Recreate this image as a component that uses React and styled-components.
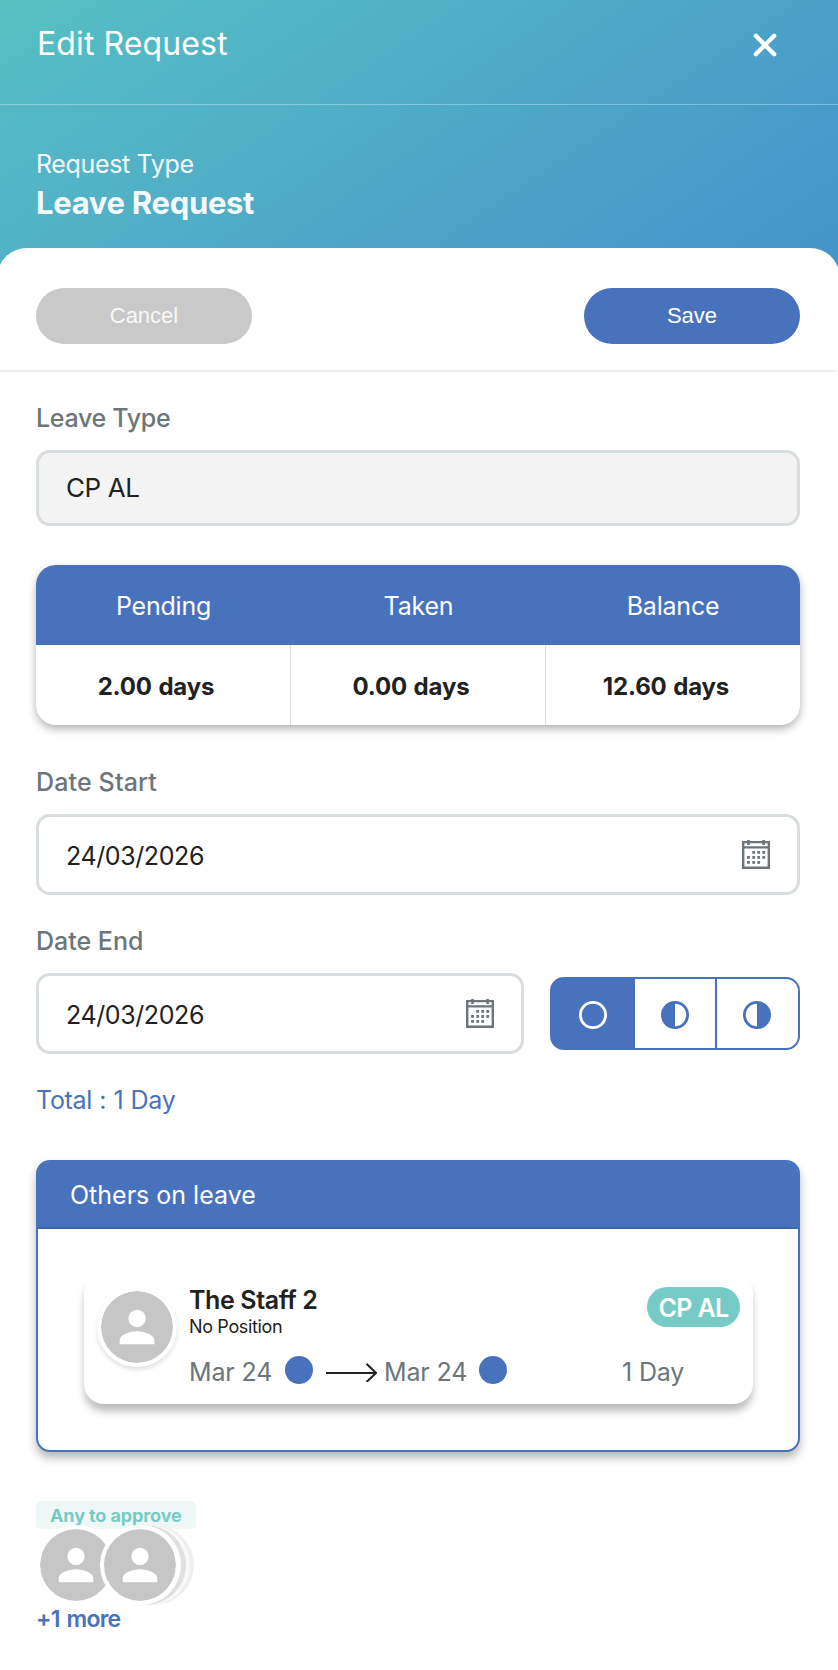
import React from 'react'
import styled, { createGlobalStyle } from 'styled-components'

const blue = '#4872bc'
const grey = '#6c757a'

const GlobalStyle = createGlobalStyle`
  * {
    box-sizing: border-box;
  }
  body {
    margin: 0;
    overflow-x: hidden;
    background: #fff;
    color: #212121;
    font-family: Inter, "Liberation Sans", sans-serif;
    font-size: 25px;
    line-height: 32px;
  }
  button {
    border: none;
    padding: 0;
    background: none;
    cursor: pointer;
  }
  svg {
    display: block;
    flex: none;
  }
`

const Header = styled.header`
  height: 282px;
  color: #fff;
  background: linear-gradient(146deg, #58c2c2 0%, #54bac5 12%, #50afc7 39%, #4a9fc8 71%, #4493c9 100%);
`

const TitleBar = styled.div`
  display: flex;
  justify-content: space-between;
  align-items: flex-start;
  height: 105px;
  padding: 23px 61px 0 37px;
  border-bottom: 1px solid rgba(255, 255, 255, 0.3);
`

const Title = styled.h1`
  margin: 0;
  font-size: 32px;
  font-weight: 400;
  line-height: 42px;
  letter-spacing: 0.1px;
`

const CloseButton = styled.button`
  margin-top: 10px;
`

const RequestType = styled.div`
  padding: 40px 36px 0;
  line-height: 38px;
  letter-spacing: -0.35px;
  color: #f5f9fc;
`

const RequestName = styled.div`
  font-size: 31px;
  font-weight: 700;
  line-height: 40px;
  letter-spacing: -0.3px;
`

// a little wider than the page, so its round corners run off both edges
const Sheet = styled.main`
  margin: -34px -2px 0 -3px;
  padding: 0 2px 0 3px;
  background: #fff;
  border-radius: 30px 30px 0 0;
`

const Actions = styled.div`
  display: flex;
  justify-content: space-between;
  margin-right: 2px;
  padding: 40px 36px 26px;
  border-bottom: 2px solid #f1f1f1;
`

const PillButton = styled.button`
  width: 216px;
  height: 56px;
  border-radius: 28px;
  font-family: "Liberation Sans", Arial, sans-serif;
  font-size: 22px;
  color: ${p => (p.$primary ? '#fff' : '#f8f8f8')};
  background: ${p => (p.$primary ? blue : '#c9c9c9')};
`

const Form = styled.div`
  padding: 30px 38px 0 36px;
`

const Label = styled.div`
  margin-bottom: 16px;
  font-weight: 500;
  color: ${grey};
  letter-spacing: ${p => p.$spacing || '0'};
`

const Field = styled.div`
  flex: 1;
  display: flex;
  align-items: center;
  justify-content: space-between;
  height: ${p => (p.$disabled ? '76px' : '81px')};
  padding: 0 27px;
  border: 3px solid #d8dddf;
  border-radius: 14px;
  background: ${p => (p.$disabled ? '#f4f4f4' : '#fff')};
  font-size: ${p => (p.$disabled ? '26px' : '25px')};
  letter-spacing: -0.4px;
`

const FieldValue = styled.span`
  padding-top: 2px;
`

const Balances = styled.div`
  display: grid;
  grid-template-columns: 255px 255px 254px;
  grid-auto-rows: 80px;
  margin: 39px 0 41px;
  border-radius: 20px;
  overflow: hidden;
  box-shadow: 0 4px 8px rgba(0, 0, 0, 0.3);
`

const HeadCell = styled.div`
  display: flex;
  align-items: center;
  justify-content: center;
  padding-top: 2px;
  color: #fff;
  background: ${blue};
  letter-spacing: -0.2px;
`

const Cell = styled.div`
  display: flex;
  align-items: center;
  justify-content: center;
  padding: 4px 14px 0 0;
  font-size: 24px;
  font-weight: 700;
  letter-spacing: -0.15px;
  word-spacing: 1px;
  border-right: 1px solid #d8dddf;
  &:last-child {
    border-right: none;
  }
`

const DateRow = styled.div`
  display: flex;
  align-items: center;
  gap: 26px;
  margin-bottom: ${p => p.$gap};
`

const Segments = styled.div`
  display: grid;
  grid-template-columns: 83px 80px 83px;
  width: 250px;
  height: 73px;
  border: 2px solid ${blue};
  border-radius: 14px;
  background: ${blue};
  overflow: hidden;
`

const Segment = styled.button`
  display: flex;
  align-items: center;
  justify-content: center;
  padding: 2px 1px 0 0;
  color: ${p => (p.$active ? '#fff' : blue)};
  background: ${p => (p.$active ? blue : '#fff')};
  &:last-child {
    border-left: 2px solid ${blue};
  }
`

const Total = styled.div`
  padding-top: 1px;
  color: ${blue};
  letter-spacing: -0.3px;
  word-spacing: 0.5px;
`

const Others = styled.section`
  margin: 44px 0 49px;
  border: 2px solid ${blue};
  border-radius: 14px;
  background: #fff;
  box-shadow: 0 6px 10px rgba(0, 0, 0, 0.28);
`

const OthersTitle = styled.div`
  height: 67px;
  padding: 17px 32px 0;
  color: #fff;
  background: ${blue};
  border-bottom: 2px solid #4067aa;
  border-radius: 11px 11px 0 0;
`

const OthersBody = styled.div`
  padding: 44px 45px 46px 46px;
`

const StaffCard = styled.div`
  display: flex;
  height: 131px;
  padding: 12px 13px 0;
  border-radius: 20px;
  background: #fff;
  box-shadow: 0 8px 9px -1px rgba(0, 0, 0, 0.28);
`

const AvatarCircle = styled.div`
  flex: none;
  display: flex;
  align-items: center;
  justify-content: center;
  width: 80px;
  height: 80px;
  border: 4px solid #fff;
  border-radius: 50%;
  background: #c6c6c6;
  background-clip: padding-box;
`

const StaffAvatar = styled(AvatarCircle)`
  margin-top: 2px;
  box-shadow: 0 3px 4px rgba(0, 0, 0, 0.12);
`

const StaffInfo = styled.div`
  flex: 1;
  padding-left: 12px;
`

const StaffTop = styled.div`
  display: flex;
  justify-content: space-between;
  height: 52px;
`

const StaffName = styled.div`
  font-weight: 600;
  line-height: 31px;
  letter-spacing: -0.4px;
`

const Position = styled.div`
  font-size: 18px;
  line-height: 21px;
  letter-spacing: -0.35px;
`

const Badge = styled.div`
  display: flex;
  align-items: center;
  justify-content: center;
  width: 93px;
  height: 40px;
  margin-top: 2px;
  padding-top: 1px;
  border-radius: 20px;
  color: #fff;
  font-weight: 600;
  letter-spacing: -0.6px;
  background: #77cbc6;
`

const Period = styled.div`
  display: grid;
  grid-template-columns: 96px 40px 59px 95px 143px auto;
  align-items: center;
  margin-top: 19px;
  letter-spacing: -0.15px;
  color: ${grey};
`

const Dot = styled.div`
  width: 28px;
  height: 28px;
  margin-bottom: 4px;
  border-radius: 50%;
  background: ${blue};
`

const Tag = styled.div`
  width: 160px;
  height: 28px;
  padding-left: 14px;
  border-radius: 5px;
  font-size: 18px;
  font-weight: 700;
  line-height: 29px;
  letter-spacing: -0.1px;
  color: #77cbc6;
  background: #eef8f7;
`

const Approvers = styled.div`
  display: flex;
  margin-top: -4px;
`

// the last avatar shows the hidden ones as discs peeking out behind it
const StackedAvatar = styled(AvatarCircle)`
  & + & {
    margin-left: -16px;
    box-shadow: 1px 0 0 #fff, 6px 0 0 #e0e0e0, 10px 0 0 #f9f9f9, 14px 0 0 #efefef;
  }
`

const More = styled.div`
  font-size: 23px;
  font-weight: 600;
  line-height: 28px;
  letter-spacing: -0.8px;
  word-spacing: 2px;
  color: ${blue};
`

const CloseIcon = () => (
  <svg width="24" height="24" viewBox="0 0 24 24" stroke="#fff" strokeWidth="4.4" strokeLinecap="round">
    <path d="M2.8 2.8 21.2 21.2M21.2 2.8 2.8 21.2" />
  </svg>
)

const PersonIcon = () => (
  <svg width="52" height="52" viewBox="0 0 24 24" fill="#fff">
    <circle cx="12" cy="8" r="4" />
    <path d="M12 14c-2.67 0-8 1.34-8 4v2h16v-2c0-2.66-5.33-4-8-4z" />
  </svg>
)

const dots = [[11.7, 12.4], [16.7, 12.4], [21.7, 12.4], [6.5, 17.4], [11.7, 17.4], [16.7, 17.4], [21.7, 17.4], [6.5, 22.4], [11.7, 22.4], [16.7, 22.4]]

const CalendarIcon = () => (
  <svg width="28" height="29" viewBox="0 0 28 29" fill={grey}>
    <path d="M0 1h28v28H0zM2.4 3.2v3h23.2v-3zM2.4 8.4v18.2h23.2V8.4z" fillRule="evenodd" />
    <path d="M5.2 0h2.6v5H5.2zM20.3 0h2.6v5h-2.6z" />
    {dots.map(([x, y]) => <rect key={x + '-' + y} x={x - 1.4} y={y - 1.4} width="2.8" height="2.8" />)}
  </svg>
)

const DayIcon = ({ half }) => (
  <svg width="28" height="28" viewBox="0 0 28 28" fill="none">
    <circle cx="14" cy="14" r="12.6" stroke="currentColor" strokeWidth="2.8" />
    {half === 'left' && <path d="M14 1a13 13 0 0 0 0 26z" fill="currentColor" />}
    {half === 'right' && <path d="M14 1a13 13 0 0 1 0 26z" fill="currentColor" />}
  </svg>
)

const ArrowIcon = () => (
  <svg width="52" height="20" viewBox="0 0 52 20" fill="none" stroke="#212121" strokeWidth="2">
    <path d="M1 11h50M41.5 1.8 51 11l-9.5 9" />
  </svg>
)

export default function App() {
  return (
    <>
      <GlobalStyle />
      <Header>
        <TitleBar>
          <Title>Edit Request</Title>
          <CloseButton aria-label="Close"><CloseIcon /></CloseButton>
        </TitleBar>
        <RequestType>
          Request Type
          <RequestName>Leave Request</RequestName>
        </RequestType>
      </Header>
      <Sheet>
        <Actions>
          <PillButton>Cancel</PillButton>
          <PillButton $primary>Save</PillButton>
        </Actions>
        <Form>
          <Label $spacing="-0.3px">Leave Type</Label>
          <Field $disabled>CP AL</Field>
          <Balances>
            <HeadCell>Pending</HeadCell>
            <HeadCell>Taken</HeadCell>
            <HeadCell>Balance</HeadCell>
            <Cell>2.00 days</Cell>
            <Cell>0.00 days</Cell>
            <Cell>12.60 days</Cell>
          </Balances>
          <Label $spacing="0.15px">Date Start</Label>
          <DateRow $gap="30px">
            <Field><FieldValue>24/03/2026</FieldValue> <CalendarIcon /></Field>
          </DateRow>
          <Label>Date End</Label>
          <DateRow $gap="29px">
            <Field><FieldValue>24/03/2026</FieldValue> <CalendarIcon /></Field>
            <Segments>
              <Segment $active aria-label="Full day"><DayIcon /></Segment>
              <Segment aria-label="First half"><DayIcon half="left" /></Segment>
              <Segment aria-label="Second half"><DayIcon half="right" /></Segment>
            </Segments>
          </DateRow>
          <Total>Total : 1 Day</Total>
          <Others>
            <OthersTitle>Others on leave</OthersTitle>
            <OthersBody>
              <StaffCard>
                <StaffAvatar><PersonIcon /></StaffAvatar>
                <StaffInfo>
                  <StaffTop>
                    <div>
                      <StaffName>The Staff 2</StaffName>
                      <Position>No Position</Position>
                    </div>
                    <Badge>CP AL</Badge>
                  </StaffTop>
                  <Period>
                    <span>Mar 24</span>
                    <Dot />
                    <ArrowIcon />
                    <span>Mar 24</span>
                    <Dot />
                    <span>1 Day</span>
                  </Period>
                </StaffInfo>
              </StaffCard>
            </OthersBody>
          </Others>
          <Tag>Any to approve</Tag>
          <Approvers>
            <StackedAvatar><PersonIcon /></StackedAvatar>
            <StackedAvatar><PersonIcon /></StackedAvatar>
          </Approvers>
          <More>+1 more</More>
        </Form>
      </Sheet>
    </>
  )
}
